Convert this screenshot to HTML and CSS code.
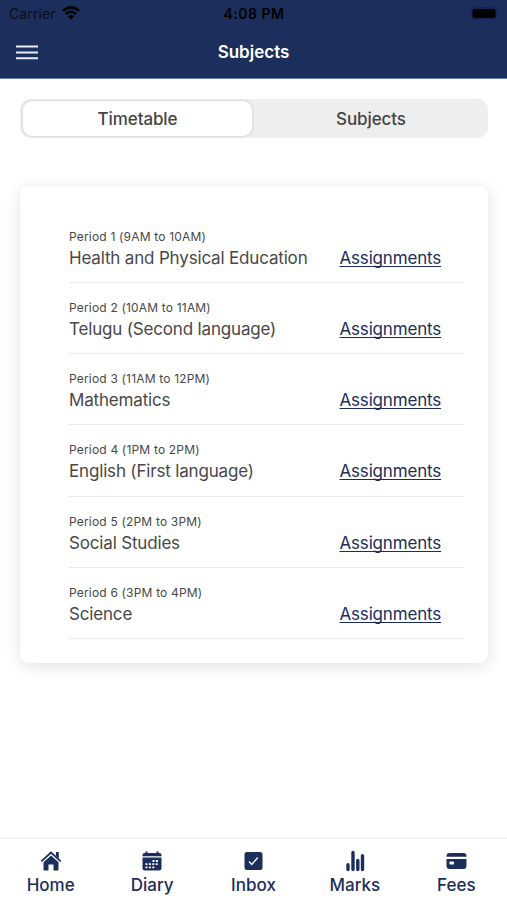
FILE: index.html
```html
<!DOCTYPE html>
<html lang="en">
<head>
<meta charset="utf-8">
<title>Subjects</title>
<link rel="stylesheet" href="styles.css">
</head>
<body>
<div class="app">
  <header class="header">
    <div class="status">
      <div class="carrier"><span>Carrier</span>
        <svg class="wifi" viewBox="0 0 18 14" width="18" height="14"><g fill="none" stroke="#000" stroke-width="2.5"><path d="M.9 4.7Q9-1.9 17.1 4.7"/><path d="M3.8 8Q9 3.6 14.2 8"/></g><path d="M9 13.5 5.9 10.4Q9 7.9 12.1 10.4Z"/></svg>
      </div>
      <span class="time">4:08 PM</span>
      <svg class="battery" viewBox="0 0 30 16" width="30" height="16"><rect x="1" y="1" width="26" height="13" rx="4" fill="#152650"/><rect x="2.5" y="3" width="23" height="9" rx="2"/><path d="M28 5.5q1.8 2 0 4z" fill="#152650"/></svg>
    </div>
    <div class="navbar">
      <svg class="menu" viewBox="0 0 22 15" width="22" height="15"><path d="M0 1.6h22M0 7.6h22M0 13.2h22" stroke="#e6ebf5" stroke-width="2"/></svg>
      <h1 class="title">Subjects</h1>
      <span></span>
    </div>
  </header>
  <main class="content">
    <div class="segments">
      <button class="segment active">Timetable</button>
      <button class="segment">Subjects</button>
    </div>
    <section class="card">
      <div class="row"><div class="period">Period 1 (9AM to 10AM)</div><div class="line"><span class="subject">Health and Physical Education</span><a class="link" href="#">Assignments</a></div></div>
      <div class="row"><div class="period">Period 2 (10AM to 11AM)</div><div class="line"><span class="subject">Telugu (Second language)</span><a class="link" href="#">Assignments</a></div></div>
      <div class="row"><div class="period">Period 3 (11AM to 12PM)</div><div class="line"><span class="subject">Mathematics</span><a class="link" href="#">Assignments</a></div></div>
      <div class="row"><div class="period">Period 4 (1PM to 2PM)</div><div class="line"><span class="subject">English (First language)</span><a class="link" href="#">Assignments</a></div></div>
      <div class="row"><div class="period">Period 5 (2PM to 3PM)</div><div class="line"><span class="subject">Social Studies</span><a class="link" href="#">Assignments</a></div></div>
      <div class="row"><div class="period">Period 6 (3PM to 4PM)</div><div class="line"><span class="subject">Science</span><a class="link" href="#">Assignments</a></div></div>
    </section>
  </main>
  <nav class="tabs">
    <a class="tab" href="#"><svg viewBox="0 0 22 22" width="22" height="22"><path d="M3.5 12.3 11 5.4l7.5 6.9v7.2q0 1-1 1h-4v-6h-5v6h-4q-1 0-1-1z"/><path d="M1.3 11.3 11 2.5l9.7 8.8" fill="none" stroke="#1c2e5c" stroke-width="1.8"/><path d="M16 2h2.8v6.5L16 6z"/></svg><span>Home</span></a>
    <a class="tab" href="#"><svg viewBox="0 0 22 22" width="22" height="22"><path d="M1.5 5q0-2 2-2h1V1.5h2V3h9V1.5h2V3h1q2 0 2 2v1.2h-19z"/><path d="M1.5 7.6h19v10.6q0 2.3-2.3 2.3H3.8q-2.3 0-2.3-2.3z"/><path d="M11.5 11h6M4.5 14.2h13M4.5 17.3h10" stroke="#fff" stroke-width="1.8" stroke-dasharray="2 1.4" fill="none"/></svg><span>Diary</span></a>
    <a class="tab" href="#"><svg viewBox="0 0 22 22" width="22" height="22"><rect x="2.5" y="2" width="18" height="18" rx="2.5"/><path d="m7 11.5 2.8 3 6-7" fill="none" stroke="#fff" stroke-width="1.3"/></svg><span>Inbox</span></a>
    <a class="tab" href="#"><svg viewBox="0 0 22 22" width="22" height="22"><path d="M4 14.8v4.7M9 2.5v17M13.8 10.5v9M18.5 5.7v13.8" fill="none" stroke="#1c2e5c" stroke-width="3.4" stroke-linecap="round"/></svg><span>Marks</span></a>
    <a class="tab" href="#"><svg viewBox="0 0 22 22" width="22" height="22"><path d="M1.5 6.2Q1.5 3 4.5 3h14q3 0 3 3.2v.6h-20zM1.5 9h20v6.5q0 3.5-3 3.5h-14q-3 0-3-3.5z"/><rect x="4.5" y="11.5" width="4.5" height="3" rx=".7" fill="#fff"/></svg><span>Fees</span></a>
  </nav>
</div>
</body>
</html>
```
FILE: styles.css
```css
* { box-sizing: border-box; }
body {
  margin: 0;
  background: #fff;
  font-family: Inter, "Liberation Sans", sans-serif;
  color: #484848;
}
.app { height: 900px; display: flex; flex-direction: column; overflow: hidden; }
.header { height: 79px; background: #1c2e5c; border-bottom: 1px solid #6d82ab; flex: none; }
.status {
  height: 27px;
  padding: 0 7px 0 9px;
  display: grid;
  grid-template-columns: 1fr auto 1fr;
  align-items: center;
  color: #000;
  font-size: 14px;
}
.carrier { display: flex; align-items: center; gap: 6px; color: #080d1b; letter-spacing: .1px; }
.wifi { margin-top: -2px; }
.time { font-weight: 600; font-size: 14px; letter-spacing: .5px; margin-left: -1px; }
.battery { justify-self: end; }
.navbar {
  height: 50px;
  padding: 0 16px;
  display: grid;
  grid-template-columns: 1fr auto 1fr;
  align-items: center;
}
.title { margin: 0; font-size: 17px; font-weight: 600; color: #fff; }
.content { flex: 1; padding: 20px 19px 0 20px; }
.segments {
  height: 39px;
  display: grid;
  grid-template-columns: 1fr 1fr;
  background: #eee;
  border-radius: 10px;
}
.segment {
  border: 0;
  padding: 0;
  background: none;
  border-radius: 9px;
  font: 500 17px Inter, "Liberation Sans", sans-serif;
  letter-spacing: -.1px;
  color: #454545;
}
.active {
  margin: 2px 2px 2px 3px;
  background: #fff;
  box-shadow: 0 0 2px 1px #d8d8d8;
}
.card {
  margin-top: 48px;
  height: 477px;
  padding: 25.5px 24px 0 49px;
  border-radius: 9px;
  background: #fff;
  box-shadow: 0 3px 16px rgba(0, 0, 0, .12);
}
.row { height: 71.3px; padding-top: 17px; border-bottom: 1px solid #e9e9e9; }
.period { font-size: 12px; line-height: 16px; letter-spacing: .18px; }
.line { display: grid; grid-template-columns: 270.5px auto; justify-content: start; line-height: 26px; font-size: 17px; letter-spacing: -.17px; }
.link { color: #1c2e5c; text-decoration: underline; text-decoration-thickness: 1px; text-underline-offset: 2px; text-decoration-skip-ink: none; }
.tabs {
  height: 62px;
  flex: none;
  border-top: 1px solid #ededed;
  display: grid;
  grid-template-columns: repeat(5, 1fr);
}
.tab {
  display: flex;
  flex-direction: column;
  align-items: center;
  padding-top: 11px;
  color: #1c2e5c;
  text-decoration: none;
  font-size: 17px;
  font-weight: 500;
  line-height: 26px;
}
.tab svg { fill: #1c2e5c; flex: none; }
```
